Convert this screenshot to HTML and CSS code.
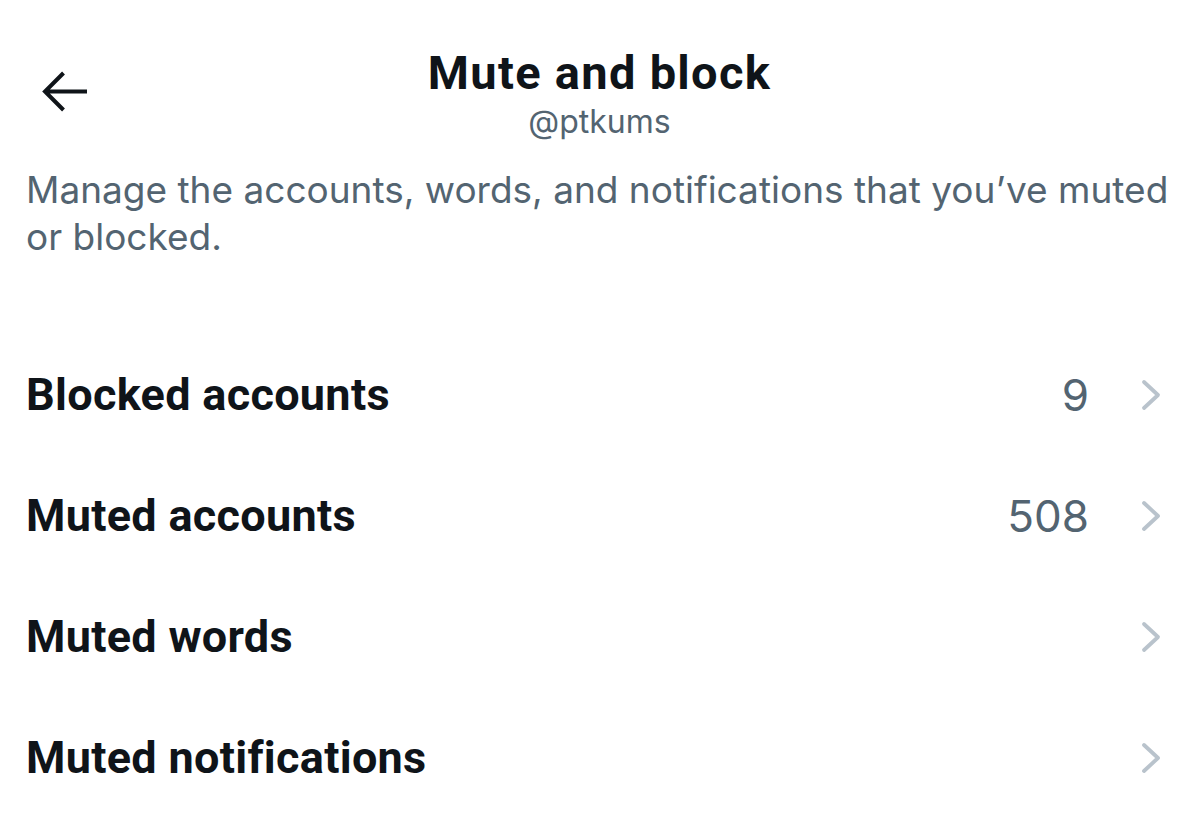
FILE: index.html
```html
<!DOCTYPE html>
<html lang="en">
<head>
<meta charset="utf-8">
<title>Mute and block</title>
<link rel="stylesheet" href="styles.css">
</head>
<body>
<div class="screen">
  <header class="topbar">
    <div class="back">
      <svg class="back-icon" viewBox="0 0 50 44" width="50" height="44" aria-hidden="true">
        <path d="M47 21.5H5.5M23.5 3L5 21.5L23.5 40" fill="none" stroke="#0f1419" stroke-width="4" stroke-linecap="butt" stroke-linejoin="miter"/>
      </svg>
    </div>
    <div class="titles">
      <h1 class="title">Mute and block</h1>
      <div class="handle">@ptkums</div>
    </div>
    <div class="spacer"></div>
  </header>

  <p class="desc">Manage the accounts, words, and notifications that you’ve muted or blocked.</p>

  <ul class="list">
    <li class="row">
      <span class="label">Blocked accounts</span>
      <span class="count">9</span>
      <svg class="chev" viewBox="0 0 20 32" width="20" height="32" aria-hidden="true"><path d="M3 3L17 16L3 29" fill="none" stroke="#b9c3cc" stroke-width="3.8" stroke-linecap="round" stroke-linejoin="round"/></svg>
    </li>
    <li class="row">
      <span class="label">Muted accounts</span>
      <span class="count">508</span>
      <svg class="chev" viewBox="0 0 20 32" width="20" height="32" aria-hidden="true"><path d="M3 3L17 16L3 29" fill="none" stroke="#b9c3cc" stroke-width="3.8" stroke-linecap="round" stroke-linejoin="round"/></svg>
    </li>
    <li class="row">
      <span class="label">Muted words</span>
      <span class="count"></span>
      <svg class="chev" viewBox="0 0 20 32" width="20" height="32" aria-hidden="true"><path d="M3 3L17 16L3 29" fill="none" stroke="#b9c3cc" stroke-width="3.8" stroke-linecap="round" stroke-linejoin="round"/></svg>
    </li>
    <li class="row">
      <span class="label">Muted notifications</span>
      <span class="count"></span>
      <svg class="chev" viewBox="0 0 20 32" width="20" height="32" aria-hidden="true"><path d="M3 3L17 16L3 29" fill="none" stroke="#b9c3cc" stroke-width="3.8" stroke-linecap="round" stroke-linejoin="round"/></svg>
    </li>
  </ul>
</div>
</body>
</html>
```

FILE: styles.css
```css
* { box-sizing: border-box; }
html, body {
  margin: 0;
  padding: 0;
  background: #ffffff;
}
body {
  font-family: Roboto, "Noto Sans", "Liberation Sans", sans-serif;
  color: #0f1419;
  width: 1199px;
  height: 835px;
  overflow: hidden;
}
.screen {
  display: flex;
  flex-direction: column;
}
.topbar {
  display: grid;
  grid-template-columns: 1fr auto 1fr;
  padding-top: 45px;
}
.back {
  padding-left: 40px;
  padding-top: 25px;
}
.back-icon { display: block; }
.titles {
  display: flex;
  flex-direction: column;
  align-items: center;
}
.title {
  margin: 0;
  font-size: 47px;
  line-height: 55px;
  font-weight: 700;
  letter-spacing: 1.3px;
}
.handle {
  margin-top: 3px;
  font-family: Inter, Roboto, sans-serif;
  font-size: 32px;
  line-height: 38px;
  color: #536471;
}
.desc {
  margin: 25px 0 0;
  padding: 0 20px 0 26px;
  font-family: Inter, Roboto, sans-serif;
  font-size: 37px;
  line-height: 47px;
  color: #536471;
}
.list {
  list-style: none;
  margin: 74px 0 0;
  padding: 0;
}
.row {
  display: flex;
  align-items: center;
  height: 121px;
  padding: 0 38px 0 26px;
}
.label {
  flex: 1;
  font-size: 45px;
  line-height: 54px;
  font-weight: 700;
  letter-spacing: 0.3px;
}
.count {
  font-family: Inter, Roboto, sans-serif;
  font-size: 44px;
  line-height: 54px;
  color: #536471;
  margin-right: 52px;
}
.chev {
  display: block;
  flex: none;
}
```
